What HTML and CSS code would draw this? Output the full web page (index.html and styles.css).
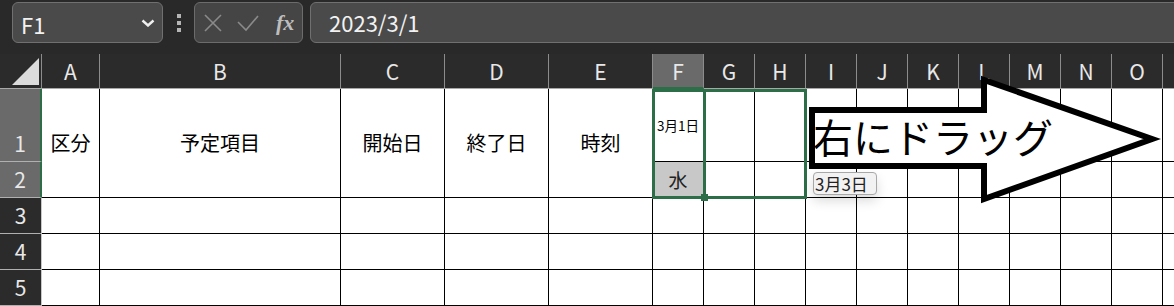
FILE: index.html
```html
<!DOCTYPE html>
<html lang="ja">
<head>
<meta charset="utf-8">
<title>Excel</title>
<link rel="stylesheet" href="styles.css">
</head>
<body>
<div class="app">
  <div class="toolbar">
    <div class="namebox">
      <span class="ref">F1</span>
      <svg class="chev" width="14" height="8" viewBox="0 0 14 8"><path d="M1.5 1.5 L7 6.5 L12.5 1.5" fill="none" stroke="#f0f0f0" stroke-width="2.4"/></svg>
    </div>
    <div class="dots"><i></i><i></i><i></i></div>
    <div class="fxbox">
      <svg width="18" height="18" viewBox="0 0 18 18"><path d="M1 1 L17 17 M17 1 L1 17" stroke="#8a8a8a" stroke-width="1.6" fill="none"/></svg>
      <svg width="22" height="18" viewBox="0 0 22 18"><path d="M1 8 L9 16 L21 2" stroke="#8a8a8a" stroke-width="1.6" fill="none"/></svg>
      <span class="fx">fx</span>
    </div>
    <div class="formula">2023/3/1</div>
  </div>

  <div class="sheet">
    <div class="h corner"><i class="tri"></i></div>
    <div class="h">A</div><div class="h">B</div><div class="h">C</div><div class="h">D</div><div class="h">E</div>
    <div class="h hsel">F</div><div class="h">G</div><div class="h">H</div><div class="h">I</div><div class="h">J</div>
    <div class="h">K</div><div class="h">L</div><div class="h">M</div><div class="h">N</div><div class="h">O</div><div class="h last"></div>

    <div class="r rsel">1</div>
    <div class="c m">区分</div><div class="c m">予定項目</div><div class="c m">開始日</div><div class="c m">終了日</div><div class="c m">時刻</div>
    <div class="c small">3月1日</div>
    <div class="c"></div><div class="c"></div><div class="c"></div><div class="c"></div><div class="c"></div><div class="c"></div><div class="c"></div><div class="c"></div><div class="c"></div>
    <div class="c last"></div>

    <div class="r rsel">2</div>
    <div class="c gray">水</div>
    <div class="c"></div><div class="c"></div><div class="c"></div><div class="c"></div><div class="c"></div><div class="c"></div><div class="c"></div><div class="c"></div><div class="c"></div>
    <div class="c last"></div>

    <div class="r">3</div>
    <div class="c"></div><div class="c"></div><div class="c"></div><div class="c"></div><div class="c"></div>
    <div class="c"></div><div class="c"></div><div class="c"></div><div class="c"></div><div class="c"></div><div class="c"></div><div class="c"></div><div class="c"></div><div class="c"></div><div class="c"></div>
    <div class="c last"></div>

    <div class="r">4</div>
    <div class="c"></div><div class="c"></div><div class="c"></div><div class="c"></div><div class="c"></div>
    <div class="c"></div><div class="c"></div><div class="c"></div><div class="c"></div><div class="c"></div><div class="c"></div><div class="c"></div><div class="c"></div><div class="c"></div><div class="c"></div>
    <div class="c last"></div>

    <div class="r">5</div>
    <div class="c"></div><div class="c"></div><div class="c"></div><div class="c"></div><div class="c"></div>
    <div class="c"></div><div class="c"></div><div class="c"></div><div class="c"></div><div class="c"></div><div class="c"></div><div class="c"></div><div class="c"></div><div class="c"></div><div class="c"></div>
    <div class="c last"></div>

    <div class="selrange"></div>
    <div class="selactive"></div>
    <div class="handle"></div>

    <svg class="arrow" width="1174" height="252" viewBox="0 0 1174 252">
      <polygon points="812,56 984,56 984,26 1152,85 984,145 984,112 812,112" fill="#fff" stroke="#000" stroke-width="6" stroke-linejoin="miter"/>
    </svg>
    <div class="arrowtext">右にドラッグ</div>
    <div class="tip">3月3日</div>
  </div>
</div>
</body>
</html>
```

FILE: styles.css
```css
* { box-sizing: border-box; margin: 0; padding: 0; }
html, body { width: 1174px; height: 306px; overflow: hidden; background: #292929; }
body { font-family: "Noto Sans CJK JP", "Noto Sans", sans-serif; }

.app { display: flex; flex-direction: column; width: 1174px; height: 306px; }

.toolbar {
  height: 54px;
  background: #292929;
  display: flex;
  align-items: flex-start;
  padding: 2px 0 0 12px;
  overflow: hidden;
}
.namebox {
  width: 151px; height: 41px;
  background: #4a4a4a;
  border: 1px solid #707070;
  border-radius: 6px;
  display: flex; align-items: center; justify-content: space-between;
  padding: 0 7px 0 8px;
}
.ref { color: #f2f2f2; font-size: 22px; line-height: 24px; padding-top: 3px; }
.dots {
  width: 31px; height: 41px;
  display: flex; flex-direction: column; align-items: center; justify-content: center; gap: 3px;
}
.dots i { display: block; width: 4px; height: 4px; background: #b5b5b5; }
.fxbox {
  width: 109px; height: 41px;
  background: #454545;
  border: 1px solid #6c6c6c;
  border-radius: 6px;
  display: flex; align-items: center;
  padding: 0 0 0 9px; gap: 15px;
}
.fx {
  font-family: "Liberation Serif", "DejaVu Serif", serif;
  font-style: italic; font-weight: bold;
  color: #bdbdbd; font-size: 22px; line-height: 22px;
  margin-left: 2px;
}
.formula {
  flex: 1; height: 41px;
  margin-left: 7px; margin-right: -40px;
  background: #4a4a4a;
  border: 1px solid #707070;
  border-radius: 6px;
  color: #f2f2f2; font-size: 22px; line-height: 39px;
  padding-left: 18px;
}

.sheet {
  position: relative;
  display: grid;
  grid-template-columns: 42px 58px 241px 104px 104px 104px repeat(10, 51px) 1fr;
  grid-template-rows: 35px 73px 36px 36px 36px 36px;
  height: 252px;
  background: #fff;
}

.h {
  background: #2b2b2b;
  border-right: 1px solid #8c8c8c;
  border-bottom: 1px solid #a8a8a8;
  color: #e8e8e8;
  font-size: 21px; line-height: 24px;
  display: flex; align-items: center; justify-content: center;
}
.h.last { border-right: none; }
.h.hsel { background: #6a6a6a; border-bottom: 2px solid #2b6e47; }
.corner { align-items: flex-end; justify-content: flex-end; padding: 0 2px 3px 0; }
.tri {
  display: block; width: 27px; height: 27px;
  background: #dcdcdc;
  clip-path: polygon(100% 0, 100% 100%, 0 100%);
}

.r {
  background: #2b2b2b;
  border-right: 1px solid #c8c8c8;
  border-bottom: 1px solid #b0b0b0;
  color: #e8e8e8;
  font-size: 21px; line-height: 35px;
  display: flex; align-items: flex-end; justify-content: center;
}
.r.rsel { background: #6a6a6a; border-right: 2px solid #2b6e47; }

.c {
  background: #fff;
  border-right: 1px solid #000;
  border-bottom: 1px solid #000;
  color: #000;
  display: flex; align-items: center; justify-content: center;
  font-size: 20px; line-height: 24px;
}
.c.last { border-right: none; }
.c.m { grid-row: span 2; }
.c.small { font-size: 13.5px; }
.c.gray { background: #c8c8c8; font-size: 19px; color: #222; }

.selrange {
  position: absolute; left: 652px; top: 35px; width: 155px; height: 110px;
  border: 3px solid #2b6e47;
}
.selactive {
  position: absolute; left: 652px; top: 35px; width: 54px; height: 110px;
  border: 3px solid #2b6e47;
}
.handle {
  position: absolute; left: 701px; top: 140px; width: 7px; height: 7px;
  background: #2b6e47;
}

.arrow { position: absolute; left: 0; top: 0; }
.arrowtext {
  position: absolute; left: 813px; top: 62px;
  font-size: 40px; line-height: 40px; color: #000;
  white-space: nowrap;
}
.tip {
  position: absolute; left: 813px; top: 118px; width: 64px; height: 23px;
  background: #f2f2f2;
  border: 1px solid #a8a8a8;
  border-radius: 4px;
  box-shadow: 0 6px 12px rgba(0,0,0,0.14);
  font-size: 17px; line-height: 21px; color: #222;
  padding-left: 1px;
  white-space: nowrap;
}
```
